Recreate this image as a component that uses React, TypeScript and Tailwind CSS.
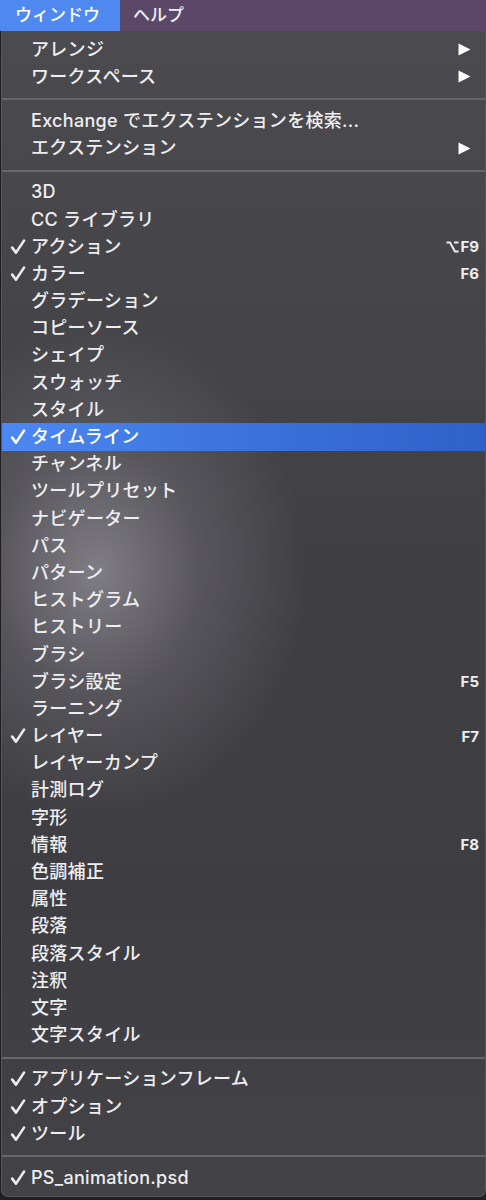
type Item = {
  label: string;
  checked?: boolean;
  shortcut?: string;
  option?: boolean;
  submenu?: boolean;
  active?: boolean;
};

const SECTIONS: Item[][] = [
  [
    { label: "アレンジ", submenu: true },
    { label: "ワークスペース", submenu: true },
  ],
  [
    { label: "Exchange でエクステンションを検索..." },
    { label: "エクステンション", submenu: true },
  ],
  [
    { label: "3D" },
    { label: "CC ライブラリ" },
    { label: "アクション", checked: true, shortcut: "F9", option: true },
    { label: "カラー", checked: true, shortcut: "F6" },
    { label: "グラデーション" },
    { label: "コピーソース" },
    { label: "シェイプ" },
    { label: "スウォッチ" },
    { label: "スタイル" },
    { label: "タイムライン", checked: true, active: true },
    { label: "チャンネル" },
    { label: "ツールプリセット" },
    { label: "ナビゲーター" },
    { label: "パス" },
    { label: "パターン" },
    { label: "ヒストグラム" },
    { label: "ヒストリー" },
    { label: "ブラシ" },
    { label: "ブラシ設定", shortcut: "F5" },
    { label: "ラーニング" },
    { label: "レイヤー", checked: true, shortcut: "F7" },
    { label: "レイヤーカンプ" },
    { label: "計測ログ" },
    { label: "字形" },
    { label: "情報", shortcut: "F8" },
    { label: "色調補正" },
    { label: "属性" },
    { label: "段落" },
    { label: "段落スタイル" },
    { label: "注釈" },
    { label: "文字" },
    { label: "文字スタイル" },
  ],
  [
    { label: "アプリケーションフレーム", checked: true },
    { label: "オプション", checked: true },
    { label: "ツール", checked: true },
  ],
  [{ label: "PS_animation.psd", checked: true }],
];

function Check() {
  return (
    <svg width="16" height="16" viewBox="0 0 16 16" className="shrink-0">
      <path
        d="M2.2 8.6 L6 13.6 L14 1.6"
        fill="none"
        stroke="currentColor"
        strokeWidth="2.6"
        strokeLinecap="round"
        strokeLinejoin="round"
      />
    </svg>
  );
}

function OptionKey() {
  return (
    <svg width="13" height="12" viewBox="0 0 13 12" className="mr-[1px]">
      <path
        d="M0.5 1.5 H4 L9 10.5 H12.5 M8 1.5 H12.5"
        fill="none"
        stroke="currentColor"
        strokeWidth="2"
      />
    </svg>
  );
}

function Arrow() {
  return (
    <svg width="13" height="13" viewBox="0 0 13 13">
      <path d="M0.5 0.5 L12.5 6.5 L0.5 12.5 Z" fill="currentColor" />
    </svg>
  );
}

function Row({ item }: { item: Item }) {
  return (
    <div
      className={`flex h-[27.2px] items-center pr-[6px] ${
        item.active
          ? "bg-[linear-gradient(90deg,#4d88f2_0%,#3d74dd_45%,#2f61c8_100%)] text-white"
          : "text-[#eeeef0]"
      }`}
    >
      <div className="flex w-[29px] justify-center pl-[2px]">{item.checked && <Check />}</div>
      <div className="flex-1 whitespace-nowrap text-[18px] font-medium leading-none tracking-[0.3px]">
        {item.label}
      </div>
      {item.shortcut && (
        <div className="flex items-center text-[15px] font-bold leading-none">
          {item.option && <OptionKey />}
          {item.shortcut}
        </div>
      )}
      {item.submenu && (
        <div className="mr-[8px] flex items-center text-white">
          <Arrow />
        </div>
      )}
    </div>
  );
}

function Separator() {
  return (
    <div className="h-[17px] pt-[8px]">
      <div className="h-[2px] bg-[#67666c]" />
    </div>
  );
}

export default function App() {
  return (
    <div
      className="h-[1200px] w-[486px] overflow-hidden bg-[#202022]"
      style={{ fontFamily: 'Inter, "Noto Sans CJK JP", sans-serif' }}
    >
      <div className="flex h-[31px] items-stretch bg-[#5b4868] text-[17px] font-medium leading-none text-[#f2f0f4]">
        <div className="flex w-[120px] items-center bg-[#4f88ef] pl-[15px] text-white">ウィンドウ</div>
        <div className="flex items-center pl-[13px]">ヘルプ</div>
      </div>
      <div className="ml-[1px] rounded-b-[7px] border-x border-b border-[#56555a] bg-[radial-gradient(ellipse_210px_250px_at_95px_540px,rgba(170,168,175,0.6),rgba(165,163,170,0.22)_50%,transparent_100%),linear-gradient(180deg,#4b4a4e_0%,#403f44_45%,#3e3d42_75%,#434247_100%)] pb-[4px] pt-[5px]">
        {SECTIONS.map((sec, i) => (
          <div key={i}>
            {i > 0 && <Separator />}
            {sec.map((item) => (
              <Row key={item.label} item={item} />
            ))}
          </div>
        ))}
      </div>
    </div>
  );
}
